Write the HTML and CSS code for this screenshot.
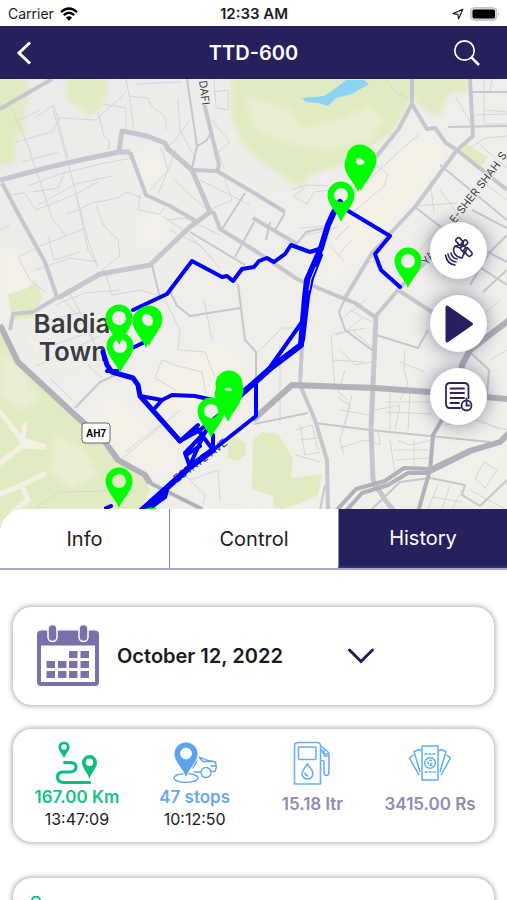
FILE: index.html
```html
<!DOCTYPE html>
<html lang="en">
<head>
<meta charset="utf-8">
<meta name="viewport" content="width=device-width, initial-scale=1">
<title>TTD-600</title>
<link rel="stylesheet" href="styles.css">
</head>
<body>
<div class="app">
  <div class="status">
    <div class="status-side">
      <span>Carrier</span>
      <svg width="18" height="14" viewBox="0 0 18 14" fill="none" stroke="#000" stroke-width="2.4"><path d="M1 5.2Q9-2.4 17 5.2"/><path d="M3.8 8.2Q9 3.4 14.2 8.2"/><path d="M9 13.8 5.9 10.6Q9 8 12.1 10.6Z" fill="#000" stroke="none"/></svg>
    </div>
    <strong class="clock">12:33 AM</strong>
    <div class="status-side status-end">
      <svg width="12" height="12" viewBox="0 0 12 12" fill="none" stroke="#222" stroke-width="1.2" stroke-linejoin="round"><path d="M10.8 1.2 1 5.6 5.8 6.4 6.6 11Z"/></svg>
      <svg width="30" height="14" viewBox="0 0 30 14"><rect x=".7" y=".7" width="26" height="12.6" rx="3.6" fill="#d8d8d8" stroke="#bbb"/><rect x="2.5" y="2.5" width="22.5" height="9" rx="1.8"/><path d="M28 4.7q1.8 2.3 0 4.6z" fill="#aaa"/></svg>
    </div>
  </div>

  <header class="bar">
    <button class="icon-btn" aria-label="Back"><svg width="16" height="24" viewBox="0 0 16 24" fill="none" stroke="#fff" stroke-width="3"><path d="M14 1.5 3 12 14 22.500"/></svg></button>
    <h1>TTD-600</h1>
    <button class="icon-btn icon-end" aria-label="Search"><svg width="28" height="28" viewBox="0 0 28 28" fill="none" stroke="#fff"><circle cx="11.500" cy="11.500" r="9.700" stroke-width="1.700"/><path d="M18.500 18.500 26 26" stroke-width="2.500"/></svg></button>
  </header>

  <section class="map">
    <svg class="map-art" viewBox="0 79 507 450" preserveAspectRatio="xMidYMin slice">
      <defs>
        <path id="pin" fill-rule="evenodd" d="M0 0C-3-9-13.500-17-13.500-27A13.500 13.500 0 0 1 13.500-27C13.500-17 3-9 0 0ZM0-34A7 7 0 1 0 0-20A7 7 0 0 0 0-34Z"/>
        <linearGradient id="land" x1="0" y1="0" x2="1" y2="1"><stop offset="0" stop-color="#ebebe9"/><stop offset=".5" stop-color="#efeeeb"/><stop offset="1" stop-color="#f1f0e8"/></linearGradient>
        <filter id="soft"><feGaussianBlur stdDeviation="7"/></filter>
        <filter id="edge"><feGaussianBlur stdDeviation="2"/></filter>
      </defs>
      <rect y="79" width="507" height="450" fill="url(#land)"/>
      <g fill="#f4f1e6" filter="url(#soft)">
        <path d="M0 245 20 250 38 290 20 320 0 310ZM130 155 160 150 165 170 150 190ZM135 225 165 205 165 240 145 245ZM345 200 420 130 450 150 380 240 320 290ZM140 380 220 340 250 370 180 430ZM110 390 150 430 190 470 140 470 90 430Z"/>
      </g>
      <g class="park">
        <g filter="url(#edge)">
          <path d="M232 70H412L410 106 390 134 360 155 335 168 310 175 300 188 285 178 258 160 240 140 231 114Z"/>
          <path d="M412 70H468V90L448 94 440 116 428 114 413 100Z"/>
          <path d="M65 70H104L108 92 100 104 99 112 88 116 80 107 68 102ZM-8 70H25L28 100 24 114 26 130 15 140 15 162-8 168Z"/>
        </g>
        <path d="M8 294 28 288 35 280 42 296 34 318 12 320ZM0 330 18 364 38 382 78 416 104 443 120 464 145 480 150 490 140 509 145 529H0Z"/>
        <path d="M228 441 237 436 246 444 246 454 238 461 228 458ZM253 440 262 432 278 434 285 445 293 460 291 478 322 474 318 495 300 503 282 509 273 507 273 496 252 489Z"/>
        <path d="M465 143 488 157 482 166 460 152Z"/>
      </g>
      <g fill="#eaeed2" filter="url(#edge)"><path d="M245 96 290 110 300 128 338 120 370 105 384 120 372 140 330 150 290 144 255 130ZM0 350 25 375 40 400 20 410 0 395ZM55 435 85 450 98 475 70 490 50 470Z"/></g>
      <g fill="none" stroke="#f4f1e4" stroke-width="5" stroke-linecap="round"><path d="M0 412 22 440 46 447 22 446 0 463M22 442 25 425M0 494 20 486 44 474M22 486 28 500 12 512M28 340 38 345"/></g>
      <path fill="#8bd5f2" d="M302 98 324 96 336 88 346 80H364L369 84 352 94 336 98 328 106 318 103 306 102Z"/>

      <g class="lane">
        <path d="M10 105 28 146 52 218 66 236M52 106 72 178 88 240 98 268M36 117 54 105 68 158M16 142 52 132 60 118 96 120 126 92M15 122 40 110M22 162 58 152M28 186 60 174 100 164 132 158M32 192 58 188 66 170M38 205 76 184 112 176M10 195 24 193 36 210 72 196 98 182M18 257 40 246 86 228M35 270 70 258 98 262M66 214 78 210 92 203 118 198 126 192 142 198M76 194 88 250 98 266M96 206 104 226 118 240 120 256 102 270M48 236 54 260 80 252M102 104 126 108 126 130M98 112 104 136 110 142 108 150M126 79 130 100 134 130M136 84 182 82M130 96 148 98 150 104 166 118 166 130M178 98 180 130 196 160M160 150 174 142 190 120M162 150 168 170 150 190M176 150 166 175 158 194M174 180 205 208M140 194 138 210 160 214 165 206M162 216 186 232 212 258M166 220 185 218 220 235M170 230 200 245 220 268M214 79 216 108 228 110 228 90 214 92M212 120 230 142 218 152 224 168M200 180 250 205M224 178 232 200 210 210"/>
        <path d="M18 257 30 280 45 292M60 296 82 320 98 350M68 290 90 330 100 362M55 305 85 293 120 290M50 320 82 312M60 330 88 322M40 350 90 332M36 366 100 336M50 378 72 400M88 365 102 378M106 275 112 295 140 290 160 296M155 378 162 360 178 366 202 372 206 395M155 378 176 390M118 462 180 410M125 452 160 425M180 470 205 495 202 510M35 508 60 492 110 491 130 495M0 230 10 226M165 300 180 330 178 350M204 300 212 340M180 350 205 352 214 375M190 480 218 470 220 500"/>
        <path d="M291 190 306 185 328 186M293 196 305 188M293 196 307 204 314 192 330 190M282 240 302 250M300 228 326 226M308 235 338 227M335 240 350 225M338 255 352 240M330 246 345 262M300 240 318 226M340 207 405 146 420 134M375 165 388 174 384 186 350 215M414 206 457 203M430 180 434 212M386 80 398 94 412 100M484 79 484 124 507 124M492 79 490 92M486 110 507 112M456 97 472 126M474 115 507 114M467 150 485 138 507 136M480 145 507 168M367 262 385 262M372 255 378 270M440 226 420 250M440 190 462 220M480 180 507 200M400 290 380 272"/>
        <path d="M280 345 280 425M255 355 282 328 302 328M333 334 366 328M331 334 335 390M336 335 352 330 375 350M340 350 355 365 372 362M332 360 365 362M345 370 338 392 348 400M340 320 366 300M350 310 372 322M345 332 362 318M405 350 404 370 408 385 400 400M338 398 350 405 345 425M340 410 370 415M352 395 340 440 344 455M375 410 400 405 395 430M390 392 390 430M410 392 408 430M385 402 430 402M385 412 432 414M340 448 365 440 380 445 378 430M390 440 396 480M398 440 410 445 432 440M394 450 428 450M396 460 430 458M414 440 414 468M300 425 305 455 320 452M296 430 312 425 318 450M300 440 318 438M296 455 320 462M438 485 428 509M450 485 442 509M462 490 450 514M432 497 462 502M484 462 497 470 485 488 475 478 484 462M440 410 507 430M445 425 480 420 500 430M470 490 507 510M490 360 507 350M485 340 507 325M488 330 470 300M500 300 480 318M435 380 460 370M425 372 400 362"/>
      </g>
      <g class="road thin">
        <path d="M187 79 197 146 192 168M197 146 206 141 212 132M245 193 222 229M254 222 235 257M190 232 245 265M75 408 100 382 116 375M176 305 190 316 240 308M170 291 177 306M238 284 245 340 256 352 256 380M254 424 308 413M285 213 275 230 258 222M266 240 270 222M152 265 160 298M296 245 306 232 325 228M448 127 507 126M470 92 507 92M415 207 442 228 507 262M440 165 507 220M507 228 472 210M507 235 490 252 470 285M315 423 370 430 430 436 490 442M372 350 345 330 339 312 350 288M376 335 418 348 428 330M470 352 489 370 487 395M430 478 465 485 462 495 480 506 507 480M372 509 400 482 430 478M372 485 395 510 410 520M318 520 325 485M483 292 507 270M507 285 472 262"/>
      </g>
      <g class="road">
        <path d="M0 109 52 79M2 183 20 217 45 262 57 297M130 152 146 195 170 206 196 221M204 103 219 165 217 171 254 193 285 212M192 170 217 171M210 212 214 213 220 229 254 250 297 279 330 293 355 303 375 317 398 290 432 255M398 290 432 312M253 218 297 244M412 79V104L398 130 375 158M412 104 427 129 435 128 446 143 457 150 507 190M457 150 415 207 372 253 345 298M457 150 473 136 470 79M58 297 33 312 13 314 10 330M302 345 300 385 315 420 327 460 328 512"/>
        <path class="wide" d="M0 180 50 167 85 159 119 152 130 152M119 152 122 131 147 136 165 143 168 149 192 170 210 212 190 227 150 265 100 274 58 298M376 315 371 430 373 480 385 500 395 512"/>
      </g>
      <g class="road trunk">
        <path d="M0 325 18 362 75 415 105 442 118 460 145 475 150 483"/>
        <path class="slim" d="M150 483 200 508 206 520M335 512 356 489 385 481 404 468 430 469 470 450 500 442 512 430M345 512 362 493 388 485 408 473 430 473M430 470 418 512M430 472 433 435 443 418 458 390"/>
        <path d="M253 420 292 385 375 388 430 392 507 399M430 471 470 451 500 442 512 430M512 318 470 350 462 365 460 385"/>
      </g>

      <g class="map-text">
        <text class="street" transform="translate(199 81) rotate(83)">DAFI</text>
        <text class="street" transform="translate(427 266) rotate(-52)">YA</text>
        <text class="street" transform="translate(455 224) rotate(-52)">E-SHER SHAH</text>
        <text class="street" transform="translate(503 161) rotate(-52)">S</text>
        <text class="street" transform="translate(177 483) rotate(-37)">ESTATE AVE</text>
        <text class="place" x="72" y="333">Baldia</text>
        <text class="place" x="73" y="361">Town</text>
      </g>

      <g class="route">
        <path d="M133 310 167 294 192 261 222 277 227 276 233 281 242 269 254 267 259 261 267 258 274 262 285 254 291 245 310 252 322 248"/>
        <path d="M345 209 390 236 375 254 381 270 400 287M145 342 130 349M107 371 118 371M180 441 200 430 225 410 254 384M140 396 162 400 172 395 195 396 213 400 222 402M162 400 155 408M256 383V416L213 450M302 322 268 370M196 427 213 450M213 450V435M185 453 207 430M185 453 190 467M205 432 190 465M186 455 200 446M167 487 165 497 150 506M180 441 198 425M106 508 111 506"/>
        <path stroke-width="5" d="M103 352 107 365 112 372 133 378 138 385 140 396 180 441"/>
        <path stroke-width="6" d="M340 202 333 214 328 225 321 248 307 280 305 297 301 345 272 367 254 383 222 410M213 450 190 467 142 510"/>
        <path stroke-width="4" d="M321 255 312 278 308 297 303 340"/>
        <path fill="#00f" d="M168 486 165 497 145 512H140Z"/>
        <path stroke-width="1" stroke="#f0efeb" d="M316 267 311 279 309 290"/>
      </g>
      <g class="shield"><rect x="82" y="423" width="28" height="20" rx="3"/><text x="96" y="437">AH7</text></g>
      <g fill="#0f0">
        <use href="#pin" x="119" y="345"/><use href="#pin" x="149" y="346"/><use href="#pin" x="146" y="348"/><use href="#pin" x="120" y="373"/>
        <use href="#pin" x="360" y="185"/><use href="#pin" x="363" y="187"/><use href="#pin" x="361" y="191"/><use href="#pin" x="358" y="192"/><use href="#pin" x="341" y="222"/><use href="#pin" x="408" y="288"/>
        <use href="#pin" x="229" y="411"/><use href="#pin" x="230" y="417"/><use href="#pin" x="228" y="422"/><use href="#pin" x="211" y="438"/><use href="#pin" x="119" y="508"/><use href="#pin" x="151" y="548"/>
      </g>
    </svg>
    <div class="fabs">
      <button class="fab" aria-label="Satellite view"><svg width="30" height="30" viewBox="0 0 30 30" fill="none" stroke="#2b2560" stroke-width="1.600" stroke-linecap="round" stroke-linejoin="round"><path d="M11 10C8 14 10 21 18 22L20 17 16 12Z"/><path d="M12 10 18 8 23 13 20 18M16 12 20 9"/><rect x="13" y="1.500" width="5" height="8" rx="2" transform="rotate(-40 15.500 5.500)"/><rect x="18.500" y="4" width="4.500" height="6" rx="1.500" transform="rotate(45 20.700 7)"/><rect x="21.500" y="11.500" width="5" height="9" rx="2" transform="rotate(-40 24 16)"/><path d="M7 17Q8 22 13 23M4 18Q5 25 12 26M1.500 19Q3 28 11 29"/></svg></button>
      <button class="fab" aria-label="Play"><svg width="30" height="40" viewBox="0 0 30 40" fill="#27215f" stroke="#27215f" stroke-width="3" stroke-linejoin="round"><path d="M3 3 27.500 20 3 37Z"/></svg></button>
      <button class="fab" aria-label="Report"><svg width="30" height="30" viewBox="0 0 30 30" fill="none" stroke="#2b2560" stroke-width="1.800" stroke-linecap="round"><path d="M16 26H6Q2 26 2 22V5Q2 1 6 1H20Q24.500 1 24.500 5V16M6.500 6.500H20M6.500 11H20M6.500 16H20M6.500 21H15"/><circle cx="22.500" cy="23.500" r="5"/><path d="M22.500 20.500V23.500H25M22.500 18.500V16.500"/></svg></button>
    </div>
  </section>

  <main class="sheet">
    <nav class="tabs">
      <button class="tab">Info</button>
      <button class="tab">Control</button>
      <button class="tab active">History</button>
    </nav>
    <div class="cards">
      <div class="card date">
        <svg width="62" height="62" viewBox="0 0 62 62"><path fill="#7872a9" fill-rule="evenodd" d="M4 5.500H58Q62 5.500 62 9.500V57Q62 61 58 61H4Q0 61 0 57V9.500Q0 5.500 4 5.500ZM4 20.500V57H58V20.500Z"/><g fill="#7872a9" stroke="#fff" stroke-width="1.500"><rect x="11" y="-.5" width="9" height="17" rx="4.500"/><rect x="42" y="-.5" width="9" height="17" rx="4.500"/></g><path fill="#7872a9" d="M32 26h8.500v7H32ZM43.500 26H52v7H43.500ZM9.500 36H18v7H9.500ZM21 36h8.500v7H21ZM32 36h8.500v7H32ZM43.500 36H52v7H43.500ZM9.500 46H18v7H9.500ZM21 46h8.500v7H21ZM32 46h8.500v7H32ZM43.500 46H52v7H43.500Z"/></svg>
        <div class="date-field">
          <select aria-label="Date"><option>October 12, 2022</option></select>
          <svg class="chevron" width="28" height="16" viewBox="0 0 28 16" fill="none" stroke="#211a55" stroke-width="3" stroke-linecap="round"><path d="M2.500 2 14 13.500 25.500 2"/></svg>
        </div>
      </div>

      <div class="card stats">
        <div class="stat green">
          <svg width="44" height="44" viewBox="0 0 44 44"><g fill="#0abf7c" fill-rule="evenodd"><path d="M9 17.500C7 12 3.500 10 3.500 6A5.500 5.500 0 0 1 14.500 6C14.500 10 11 12 9 17.500ZM9 3.200A2.800 2.800 0 1 0 9 8.800A2.800 2.800 0 0 0 9 3.200ZM34.500 38C32.500 31 27 27 27 21.500A7.500 7.500 0 0 1 42 21.500C42 27 36.500 31 34.500 38ZM34.500 17.500A3.700 3.700 0 1 0 34.500 25A3.700 3.700 0 0 0 34.500 17.500Z"/></g><path fill="none" stroke="#0abf7c" stroke-width="3" stroke-linecap="round" d="M9.500 21.500H15Q21 21.500 21 26T15 31H8Q2.500 31 2.500 36T8 41.500H34.500"/></svg>
          <strong>167.00 Km</strong><span>13:47:09</span>
        </div>
        <div class="stat blue">
          <svg width="44" height="44" viewBox="0 0 44 44"><ellipse cx="13" cy="37" rx="12" ry="4.300" fill="none" stroke="#5aa5ec" stroke-width="1.300"/><path fill="#5aa5ec" stroke="#fff" stroke-width=".8" fill-rule="evenodd" d="M13 37.500C10.500 28 1 21 1 13A12 12 0 0 1 25 13C25 21 15.500 28 13 37.500ZM13 7A5.500 5.500 0 1 0 13 18A5.500 5.500 0 0 0 13 7Z"/><g fill="none" stroke="#5aa5ec" stroke-width="1.300" stroke-linejoin="round" stroke-linecap="round"><circle cx="33" cy="31.500" r="5"/><path d="M21 31H27.500M38.500 30.500H42L43.500 26 42.500 21 35 19.500 26 16 30 20.500H37M20 27 24 20M38 25H43"/></g></svg>
          <strong>47 stops</strong><span>10:12:50</span>
        </div>
        <div class="stat mauve">
          <svg width="44" height="44" viewBox="0 0 44 44" fill="none" stroke="#69b0f4" stroke-width="1.600" stroke-linejoin="round"><path d="M4.500 43V5Q4.500 1.500 8 1.500H27Q30.500 1.500 30.500 5V43Z"/><rect x="8.500" y="6" width="17.500" height="12.500" rx="1"/><path d="M17.500 23C15 27 12 29.500 12 32.500A5.500 5.500 0 0 0 23 32.500C23 29.500 20 27 17.500 23ZM15 31.500Q15 34.500 18 35"/><path d="M31 5 38 11Q39 12 39 14V31Q39 34.500 36.500 34.500T34 31V20.500Q34 19.500 31 19.500M31 8 35 15H38.500M34 9V13H38"/></svg>
          <strong>15.18 ltr</strong>
        </div>
        <div class="stat mauve">
          <svg width="44" height="44" viewBox="0 0 44 44" fill="none" stroke="#5cadf5" stroke-width="1.500" stroke-linejoin="round"><rect x="14" y="5" width="16" height="34"/><circle cx="22" cy="22" r="5.300"/><path d="M24 20Q22 18.500 20.500 20.500T22 24 24 22.500H22M16.500 13H27.500M16.500 31H27.500" stroke-dasharray="3 1"/><path d="M13 10 11.500 8.500 6 10.500 12 31M5.500 14 1.500 17 11 34M31 10 32.500 8.500 38 10.500 32 31M38.500 14 42.500 17 33 34"/></svg>
          <strong>3415.00 Rs</strong>
        </div>
      </div>

      <div class="card trip">
        <svg width="14" height="18" viewBox="0 0 14 18"><path fill="none" stroke="#0abf7c" stroke-width="2" d="M7 14C5 9 3 7 3 4.500A3.700 3.700 0 0 1 11 4.500C11 7 9 9 7 14Z"/></svg>
      </div>
    </div>
  </main>
</div>
</body>
</html>
```
FILE: styles.css
```css
* { box-sizing: border-box; }
body {
  margin: 0;
  background: #fff;
  color: #1b1b1d;
  font-family: Inter, "Liberation Sans", sans-serif;
}
button, select { font: inherit; color: inherit; border: 0; padding: 0; background: none; }
svg { display: block; flex: none; }

.app { display: flex; flex-direction: column; height: 100vh; overflow: hidden; }

.status {
  flex: none;
  display: grid;
  grid-template-columns: 1fr auto 1fr;
  align-items: center;
  height: 26px;
  padding: 1px 7px 0 8px;
  font-size: 14px;
}
.status-side { display: flex; align-items: center; gap: 6px; }
.status-end { justify-content: flex-end; }
.clock { font-size: 15px; font-weight: 600; }

.bar {
  flex: none;
  display: grid;
  grid-template-columns: 1fr auto 1fr;
  align-items: center;
  height: 53px;
  padding: 0 16px;
  background: #26215c;
  color: #fff;
}
.bar h1 { margin: 0; font-size: 20px; font-weight: 600; }
.icon-btn { justify-self: start; }
.icon-end { justify-self: end; padding-right: 10px; }

.map { flex: none; position: relative; aspect-ratio: 507 / 450; overflow: hidden; }
.map-art { width: 100%; height: 100%; }
.park { fill: #e1ebc2; }
.lane { fill: none; stroke: #d5d6da; stroke-width: 1; }
.road { fill: none; stroke: #c5c7cf; stroke-width: 4; stroke-linejoin: round; }
.wide { stroke-width: 5; }
.thin { stroke-width: 2; }
.trunk { stroke: #b0b1b9; stroke-width: 6; }
.slim { stroke-width: 4; }
.route { fill: none; stroke: #00f; stroke-width: 4; stroke-linejoin: round; stroke-linecap: round; }
.map-text { fill: #3b3c42; text-anchor: middle; }
.place { font-size: 26px; font-weight: 600; stroke: #f2f2ee; stroke-width: 2px; paint-order: stroke; }
.street { font-size: 11px; text-anchor: start; stroke: #f2f2ee; stroke-width: 2px; paint-order: stroke; }
.shield rect { fill: #fff; stroke: #666; stroke-width: 1; }
.shield text { font: bold 10px "Liberation Sans", sans-serif; text-anchor: middle; }

.fabs { position: absolute; top: 143px; right: 20px; display: grid; gap: 16px; }
.fab {
  display: grid;
  place-items: center;
  width: 57px;
  height: 57px;
  border-radius: 50%;
  background: #fff;
  box-shadow: 0 0 18px rgba(39, 33, 95, 0.5);
}

.sheet {
  flex: 1;
  position: relative;
  margin-top: -20px;
  min-height: 0;
  overflow: hidden;
  border-radius: 24px 0 0 0;
  background: #fff;
}
.tabs {
  display: grid;
  grid-template-columns: repeat(3, 1fr);
  height: 61px;
  border-bottom: 2px solid #aaa8c2;
}
.tab { padding-top: 1px; font-size: 20px; }
.tab + .tab { border-left: 1px solid #8986ab; }
.tab.active { border-bottom: 2px solid #283680; background: #26215c; color: #fff; }

.cards { display: grid; gap: 22px; padding: 36px 12px 0; }
.card {
  border: 1px solid #d0d0d0;
  border-radius: 20px;
  background: #fff;
  box-shadow: 0 0 5px rgba(0, 0, 0, 0.35);
}
.date { display: flex; align-items: center; gap: 18px; height: 100px; padding: 0 24px; }
.date-field { display: grid; align-items: center; width: 258px; }
.date-field > * { grid-area: 1 / 1; }
.date-field select { appearance: none; width: 100%; font-size: 20px; font-weight: 600; }
.chevron { justify-self: end; pointer-events: none; }

.stats { display: grid; grid-template-columns: repeat(4, 1fr); height: 115px; padding: 12px 5px 0; }
.stat { display: flex; flex-direction: column; align-items: center; font-size: 16px; line-height: 22px; }
.stat strong { margin-top: 1px; font-size: 17px; font-weight: 600; white-space: nowrap; }
.green strong { color: #12c481; }
.blue strong { color: #68a8ef; }
.mauve strong { margin-top: 8px; color: #908ab5; }

.trip { height: 115px; margin-top: 12px; padding: 18px 16px; }
```
